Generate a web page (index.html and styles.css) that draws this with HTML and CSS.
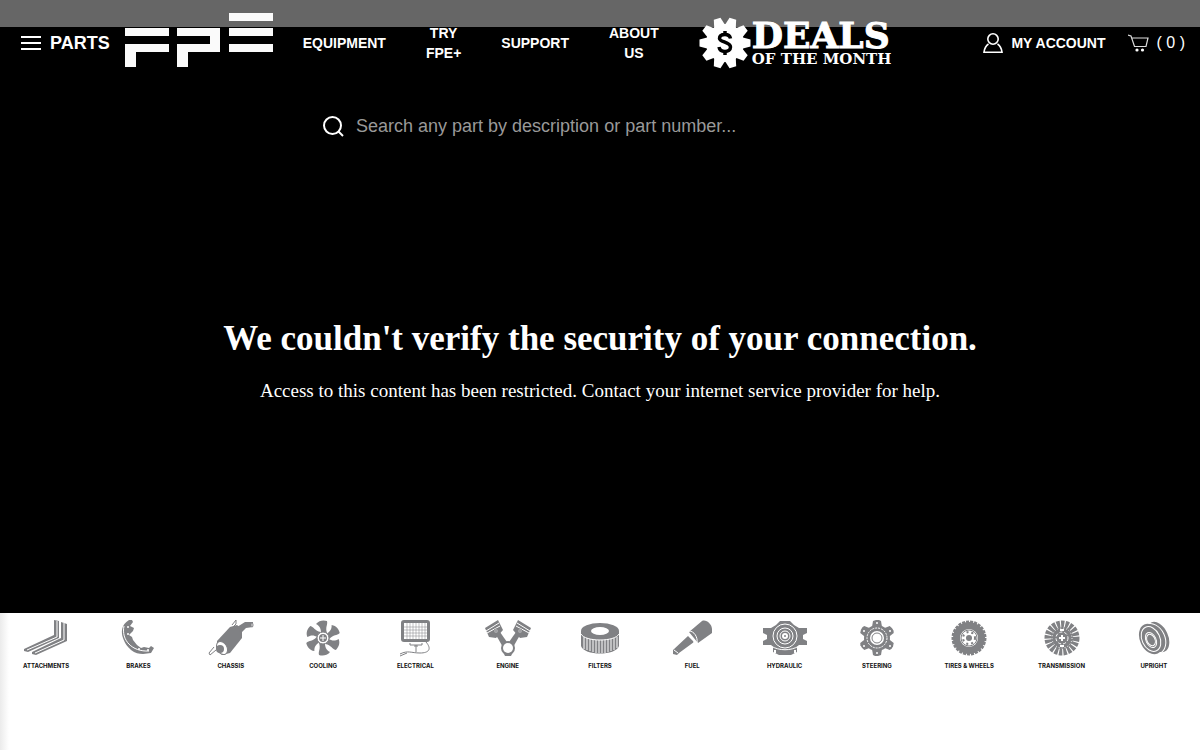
FILE: index.html
```html
<!DOCTYPE html>
<html lang="en">
<head>
    <meta charset="UTF-8">
    <meta name="viewport" content="width=device-width, initial-scale=1.0">
    <title>FPE Parts</title>
    <link rel="stylesheet" href="styles.css">
</head>
<body>

    <header class="header">
        <button class="menu-btn" type="button">
            <svg width="20" height="14" viewBox="0 0 20 14" fill="#fff"><path d="M0 0h20v2H0zM0 6h20v2H0zM0 12h20v2H0z"/></svg>
            PARTS
        </button>

        <a class="logo" href="#" aria-label="FPE">
            <svg width="148" height="60" viewBox="0 3 148 60" fill="#fafafa">
                <path d="M0 18h44v8H0zM0 34h44v8H11v15H0zM52 18h43v24H63v15H52V34h33v-8H52zM104 3h44v8h-44zM104 18h44v8h-44zM104 34h44v8h-44z"/>
            </svg>
        </a>

        <nav class="nav">
            <a href="#">EQUIPMENT</a>
            <a href="#">TRY<br>FPE+</a>
            <a href="#">SUPPORT</a>
            <a href="#">ABOUT<br>US</a>
            <a class="deals" href="#">
                <svg width="52" height="52" viewBox="-26 -26 52 52">
                    <g fill="#fff">
                        <circle r="19"/>
                        <g id="teeth">
                            <path id="tooth" d="M-6-16L-3.500-25.500h7L6-16z" transform="rotate(18)"/>
                            <use href="#tooth" transform="rotate(36)"/>
                            <use href="#tooth" transform="rotate(72)"/>
                            <use href="#tooth" transform="rotate(108)"/>
                            <use href="#tooth" transform="rotate(144)"/>
                        </g>
                        <use href="#teeth" transform="rotate(180)"/>
                    </g>
                    <path d="M5.500-4.500C5-7 3-8.500 0-8.500c-3.500 0-5.500 1.500-5.500 4C-5.500-1 5.500-1 5.500 4c0 3-2.500 4.500-5.500 4.500-3.500 0-5.500-1.500-6-4.500M0-12v4M0 8v4" fill="none" stroke="#000" stroke-width="3.500"/>
                </svg>
                <span class="deals-text">
                    <span class="deals-big">DEALS</span>
                    <span class="deals-small">OF THE MONTH</span>
                </span>
            </a>
        </nav>

        <div class="account">
            <a href="#">
                <svg width="20" height="20" viewBox="0 0 20 20" fill="none" stroke="#fff" stroke-width="1.600">
                    <circle cx="10" cy="6" r="5.200"/>
                    <path d="M5.500 11C3 12.500 1.500 15.500 1 19.200h18c-.5-3.700-2-6.700-4.500-8.200"/>
                </svg>
                MY ACCOUNT
            </a>
            <a class="cart" href="#">
                <svg width="21" height="20" viewBox="0 0 21 20">
                    <path d="M0 2l3 1 3.500 10.500H18L20 5H4" fill="none" stroke="#ddd" stroke-width="1.200"/>
                    <circle cx="9" cy="17" r="1.600" fill="#fff"/><circle cx="14.500" cy="17" r="1.600" fill="#fff"/>
                </svg>
                ( 0 )
            </a>
        </div>
    </header>

    <main class="main">
        <form class="search">
            <button type="submit" aria-label="Search">
                <svg width="21" height="21" viewBox="0 0 21 21" fill="none" stroke="#fff" stroke-width="2">
                    <circle cx="9.500" cy="9.500" r="8.500"/><path d="M15.500 15.500l4.500 4.500"/>
                </svg>
            </button>
            <input type="text" aria-label="Search parts" placeholder="Search any part by description or part number...">
        </form>

        <div class="message">
            <h1>We couldn't verify the security of your connection.</h1>
            <p>Access to this content has been restricted. Contact your internet service provider for help.</p>
        </div>
    </main>

    <section class="categories">
        <a href="#">
            <svg viewBox="0 0 46 38">
                <path d="M31 1l5 1v17L5 33l-4-1v-2l30-14zM38 3l6 2v17L13 36l-4-1v-2l29-14z"/>
                <path class="line" d="M34 2v16L4 31M41 4v17L12 34"/>
            </svg>
            ATTACHMENTS
        </a>
        <a href="#">
            <svg viewBox="0 0 46 38">
                <path d="M14 1C6 6 6 13 8 19c2 6 5 9 8 12 4 3 8 4 12 4l8-1 3-5-3-2-2 2-5-1-3 1-4-3-4-5-1-3-3-2 4-4 1-3-4-2 3-4-1-2z"/>
                <path class="line" d="M9 7c-3 14 8 26 25 25"/>
                <g fill="#fff"><circle cx="13" cy="8" r="1"/><circle cx="13" cy="15" r="1"/><circle cx="24" cy="30" r="1"/><circle cx="33" cy="31" r="1"/></g>
            </svg>
            BRAKES
        </a>
        <a href="#">
            <svg viewBox="0 0 46 38">
                <path d="M9 22L22 8l7-2 5 4v9L22 34l-8 2-5-5z"/>
                <path d="M29 8l8-5h8v5l-7 1-5 5z"/>
                <ellipse class="outline-white" cx="14" cy="29" rx="5" ry="7" transform="rotate(-30 14 29)"/>
                <circle cx="12" cy="30" r="4"/>
                <path class="stroke" d="M6 28l-5 6 1 2 6-5M24 6l4-5v4l-4 4"/>
                <ellipse class="outline-white" cx="44" cy="6" rx="1" ry="2"/>
            </svg>
            CHASSIS
        </a>
        <a href="#">
            <svg viewBox="0 0 46 38">
                <g id="blades">
                    <path id="blade" d="M21 14c0-4-1-7-5-9 3-4 8-4 11-3 1 4-2 6 0 12z"/>
                    <use href="#blade" transform="rotate(60 23 19)"/>
                    <use href="#blade" transform="rotate(120 23 19)"/>
                </g>
                <use href="#blades" transform="rotate(180 23 19)"/>
                <circle class="outline-white" cx="23" cy="19" r="6"/>
                <circle cx="23" cy="19" r="4"/>
                <path class="line" d="M23 16v6M20 19h6"/>
            </svg>
            COOLING
        </a>
        <a href="#">
            <svg viewBox="0 0 46 38">
                <rect x="9" y="1" width="29" height="22" rx="3"/>
                <rect x="12" y="4" width="23" height="16" fill="#fff"/>
                <path class="grid" d="M15 4v17M18 4v17M21 4v17M24 4v17M27 4v17M30 4v17M33 4v17M11 8h24M11 11h24M11 14h24M11 17h24"/>
                <path class="stroke" d="M18 24v2h12v-2M24 26v7M22 27h4M34 23c6 7 3 11-6 11S16 31 8 35M8 37l7-3"/>
            </svg>
            ELECTRICAL
        </a>
        <a href="#">
            <svg viewBox="0 0 46 38">
                <g id="piston">
                    <path d="M0 9L13 1l5 10-7 8-7-1z"/>
                    <path d="M11 16l4-3 9 13-5 4z"/>
                    <path class="line" d="M1 12L14 4M2 14l13-7"/>
                    <circle class="outline-white" cx="11" cy="12" r="2"/><circle cx="11" cy="12" r="1"/>
                </g>
                <use href="#piston" transform="matrix(-1 0 0 1 46 0)"/>
                <circle cx="23" cy="29" r="7"/><circle cx="23" cy="29" r="5" fill="#fff"/>
                <path d="M18 33l5 2 5-2-2 4h-6z"/>
            </svg>
            ENGINE
        </a>
        <a href="#">
            <svg viewBox="0 0 46 38">
                <path d="M4 12v15c3 10 35 10 38 0V12z"/>
                <path class="line" d="M7 18v12M10 19v12M13 20v12M16 20v13M19 21v13M22 21v13M25 21v13M28 21v13M31 20v13M34 20v12M37 19v12M40 18v11"/>
                <ellipse cx="23" cy="12" rx="19" ry="8"/>
                <ellipse cx="23" cy="12" rx="9" ry="4" fill="#fff"/>
                <path class="line" d="M4 15c4 8 34 8 38 0"/>
            </svg>
            FILTERS
        </a>
        <a href="#">
            <svg viewBox="0 0 46 38">
                <path d="M20 13L33 2c4-2 10 3 10 8v4L29 24zM19 17l6 6L10 34l-2 2-4-1v-4z"/>
                <path class="line" d="M20 12c5 0 9 6 8 12M18 16c4 0 7 4 7 8M5 31l4 3"/>
            </svg>
            FUEL
        </a>
        <a href="#">
            <svg viewBox="0 0 46 38">
                <path d="M1 9h8l5-3 4-4h10l4 4 5 3h8v5l-4 2v4l4 2v4h-8l-2 2v5l-6 3H17l-6-3v-5l-2-2H1v-4l4-2v-4l-4-2z"/>
                <circle class="line" cx="23" cy="17" r="12"/>
                <circle class="line" cx="23" cy="17" r="8"/>
                <circle class="line" cx="23" cy="17" r="5"/>
                <circle cx="23" cy="17" r="3" fill="#fff"/>
                <circle cx="23" cy="17" r="1"/>
                <path class="line" d="M9 27c8 5 20 5 28 0"/>
                <path d="M12 31h2v3h-2zM32 31h2v3h-2z" fill="#fff"/>
            </svg>
            HYDRAULIC
        </a>
        <a href="#">
            <svg viewBox="0 0 46 38">
                <g id="lugs">
                    <path id="lug" d="M18 8l1-6 3-1h3l2 1 1 6z"/>
                    <use href="#lug" transform="rotate(60 23 19)"/>
                    <use href="#lug" transform="rotate(120 23 19)"/>
                </g>
                <use href="#lugs" transform="rotate(180 23 19)"/>
                <circle cx="23" cy="19" r="13"/>
                <circle class="line" cx="23" cy="19" r="10" stroke-dasharray="2 1"/>
                <circle cx="23" cy="19" r="7" fill="#fff"/>
                <circle class="stroke" cx="23" cy="19" r="5"/>
                <g fill="#fff"><circle cx="23" cy="4" r="1"/><circle cx="36" cy="12" r="1"/><circle cx="36" cy="27" r="1"/><circle cx="23" cy="34" r="1"/><circle cx="10" cy="27" r="1"/><circle cx="10" cy="12" r="1"/></g>
            </svg>
            STEERING
        </a>
        <a href="#">
            <svg viewBox="0 0 46 38">
                <circle cx="23" cy="19" r="16"/>
                <circle class="tread" cx="23" cy="19" r="16"/>
                <circle cx="23" cy="19" r="9" fill="#fff"/>
                <circle class="bolts" cx="23" cy="19" r="6"/>
                <circle cx="23" cy="19" r="3"/>
                <circle class="stroke" cx="23" cy="19" r="8"/>
            </svg>
            TIRES &amp; WHEELS
        </a>
        <a href="#">
            <svg viewBox="0 0 46 38">
                <circle cx="23" cy="19" r="11"/>
                <circle class="vanes" cx="23" cy="19" r="13"/>
                <circle class="line" cx="23" cy="19" r="10" stroke-dasharray="1 2"/>
                <circle class="line" cx="23" cy="19" r="6" stroke-dasharray="3 2"/>
                <path d="M21 10h4v2h-4zM21 26h4v2h-4zM20 18h6v2h-6zM22 16h2v6h-2z" fill="#fff"/>
            </svg>
            TRANSMISSION
        </a>
        <a href="#">
            <svg viewBox="0 0 46 38">
                <ellipse cx="27" cy="18" rx="10" ry="16" transform="rotate(-25 27 18)"/>
                <ellipse class="line" cx="22" cy="20" rx="12" ry="16" transform="rotate(-25 22 20)"/>
                <ellipse cx="20" cy="20" rx="11" ry="16" transform="rotate(-25 20 20)"/>
                <g class="line">
                    <ellipse cx="20" cy="20" rx="9" ry="13" transform="rotate(-25 20 20)"/>
                    <ellipse cx="20" cy="21" rx="5" ry="8" transform="rotate(-25 20 21)"/>
                    <ellipse cx="20" cy="21" rx="4" ry="6" transform="rotate(-25 20 21)"/>
                </g>
            </svg>
            UPRIGHT
        </a>
    </section>

</body>
</html>
```
FILE: styles.css
```css
* {
    box-sizing: border-box;
}

body {
    margin: 0;
    font-family: "Liberation Sans", Arial, sans-serif;
    background: linear-gradient(to right, #ebebeb, #fff 9px);
    min-height: 100vh;
}

a {
    color: #fff;
    text-decoration: none;
}

button {
    background: none;
    border: none;
    padding: 0;
    color: #fff;
    cursor: pointer;
}

svg {
    display: block;
    flex-shrink: 0;
}

.header {
    display: flex;
    align-items: center;
    height: 86px;
    padding: 0 15px 0 21px;
    background: linear-gradient(#666 27px, #000 27px);
    font-size: 14px;
    font-weight: bold;
    line-height: 20px;
}

.menu-btn {
    display: flex;
    align-items: center;
    gap: 9px;
    font: bold 18px "Liberation Sans", Arial, sans-serif;
}

.logo {
    margin: 0 30px 0 15px;
}

.nav {
    display: flex;
    align-items: center;
    gap: 40px;
    text-align: center;
}

.deals {
    display: flex;
    align-items: center;
    gap: 1px;
}

.deals-text {
    display: flex;
    flex-direction: column;
    text-align: left;
    font-family: "DejaVu Serif", serif;
    white-space: nowrap;
}

.deals-big {
    font-size: 36px;
    line-height: 32px;
    -webkit-text-stroke: 1px #fff;
}

.deals-small {
    font-size: 15px;
    line-height: 16px;
}

.account {
    display: flex;
    align-items: center;
    gap: 22px;
    margin-left: auto;
    white-space: nowrap;
}

.account a {
    display: flex;
    align-items: center;
    gap: 8px;
}

.account .cart {
    font-size: 16px;
    font-weight: normal;
}

.main {
    background: #000;
    color: #fff;
    padding: 20px 20px 209px;
}

.search {
    display: flex;
    align-items: center;
    gap: 12px;
    width: 100%;
    max-width: 554px;
    height: 40px;
    margin: 0 auto;
}

.search input {
    flex: 1;
    border: none;
    outline: none;
    padding: 0;
    background: none;
    color: #fff;
    font: 18px "Liberation Sans", Arial, sans-serif;
}

.search input::placeholder {
    color: #999;
}

.message {
    padding-top: 171px;
    text-align: center;
    font-family: "Liberation Serif", "Times New Roman", serif;
}

.message h1 {
    margin: 0 0 16px;
    font-size: 35px;
    line-height: 44px;
}

.message p {
    margin: 0;
    font-size: 19px;
    line-height: 27px;
}

.categories {
    display: grid;
    grid-template-columns: repeat(13, 1fr);
    padding-top: 6px;
}

.categories a {
    display: flex;
    flex-direction: column;
    align-items: center;
    gap: 5px;
    color: #111;
    font: bold 6px/8px Inter, "Liberation Sans", sans-serif;
    white-space: nowrap;
}

.categories svg {
    width: 46px;
    height: 38px;
    fill: #808184;
}

.categories .line {
    fill: none;
    stroke: #fff;
    stroke-width: 1;
}

.categories .stroke,
.categories .grid {
    fill: none;
    stroke: #808184;
    stroke-width: 1;
}

.categories .grid {
    stroke-width: 0.5;
}

.categories .outline-white {
    fill: #fff;
    stroke: #808184;
}

.categories .tread {
    fill: none;
    stroke: #808184;
    stroke-width: 3;
    stroke-dasharray: 3 1;
}

.categories .bolts {
    fill: none;
    stroke: #808184;
    stroke-width: 2;
    stroke-dasharray: 2 3;
}

.categories .vanes {
    fill: none;
    stroke: #808184;
    stroke-width: 9;
    stroke-dasharray: 3 1;
}
```
